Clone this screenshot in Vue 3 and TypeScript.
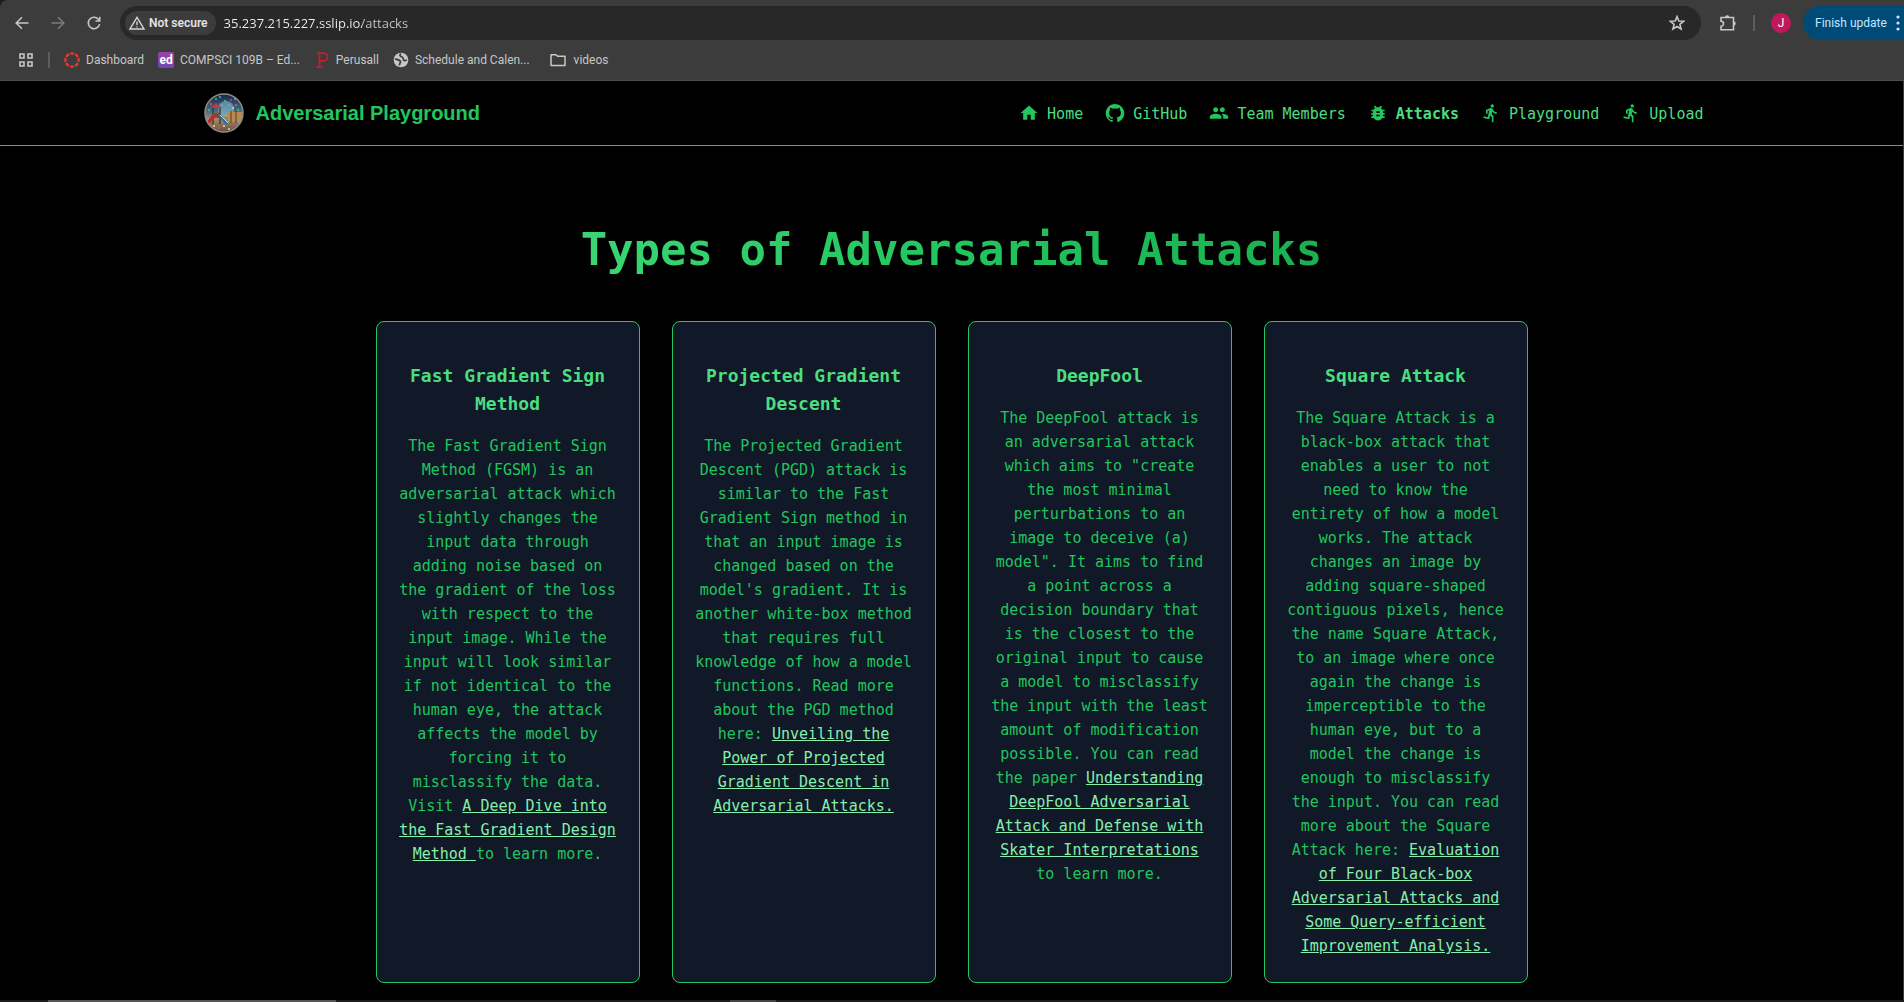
<script setup lang="ts">
interface NavItem {
  label: string
  icon: string
  viewBox: string
  active?: boolean
}

interface Attack {
  title: string
  before: string
  link: string
  after: string
}

const runner =
  'M13.49 5.48c1.1 0 2-.9 2-2s-.9-2-2-2-2 .9-2 2 .9 2 2 2zm-3.6 13.9l1-4.4 2.1 2v6h2v-7.5l-2.1-2 .6-3c1.3 1.5 3.3 2.5 5.5 2.5v-2c-1.9 0-3.5-1-4.3-2.4l-1-1.6c-.4-.6-1-1-1.7-1-.3 0-.5.1-.8.1l-5.2 2.2v4.7h2v-3.4l1.8-.7-1.6 8.1-4.9-1-.4 2 7 1.4z'

const navItems: NavItem[] = [
  { label: 'Home', viewBox: '0 0 24 24', icon: 'M10 20v-6h4v6h5v-8h3L12 3 2 12h3v8z' },
  {
    label: 'GitHub',
    viewBox: '-1 -1 26 26',
    icon: 'M12 .297c-6.63 0-12 5.373-12 12 0 5.303 3.438 9.8 8.205 11.385.6.113.82-.258.82-.577 0-.285-.01-1.04-.015-2.04-3.338.724-4.042-1.61-4.042-1.61C4.422 18.07 3.633 17.7 3.633 17.7c-1.087-.744.084-.729.084-.729 1.205.084 1.838 1.236 1.838 1.236 1.07 1.835 2.809 1.305 3.495.998.108-.776.417-1.305.76-1.605-2.665-.3-5.466-1.332-5.466-5.93 0-1.31.465-2.38 1.235-3.22-.135-.303-.54-1.523.105-3.176 0 0 1.005-.322 3.3 1.23.96-.267 1.98-.399 3-.405 1.02.006 2.04.138 3 .405 2.28-1.552 3.285-1.23 3.285-1.23.645 1.653.24 2.873.12 3.176.765.84 1.23 1.91 1.23 3.22 0 4.61-2.805 5.625-5.475 5.92.42.36.81 1.096.81 2.22 0 1.606-.015 2.896-.015 3.286 0 .315.21.69.825.57C20.565 22.092 24 17.592 24 12.297c0-6.627-5.373-12-12-12',
  },
  {
    label: 'Team Members',
    viewBox: '0 0 24 24',
    icon: 'M16 11c1.66 0 2.99-1.34 2.99-3S17.66 5 16 5c-1.66 0-3 1.34-3 3s1.34 3 3 3zm-8 0c1.66 0 2.99-1.34 2.99-3S9.66 5 8 5C6.34 5 5 6.34 5 8s1.34 3 3 3zm0 2c-2.33 0-7 1.17-7 3.5V19h14v-2.5c0-2.33-4.67-3.5-7-3.5zm8 0c-.29 0-.62.02-.97.05 1.16.84 1.97 1.97 1.97 3.45V19h6v-2.5c0-2.33-4.67-3.5-7-3.5z',
  },
  {
    label: 'Attacks',
    viewBox: '0 0 24 24',
    active: true,
    icon: 'M20 8h-2.81c-.45-.78-1.07-1.45-1.82-1.96L17 4.41 15.59 3l-2.17 2.17C12.96 5.06 12.49 5 12 5c-.49 0-.96.06-1.41.17L8.41 3 7 4.41l1.62 1.63C7.88 6.55 7.26 7.22 6.81 8H4v2h2.09c-.05.33-.09.66-.09 1v1H4v2h2v1c0 .34.04.67.09 1H4v2h2.81c1.04 1.79 2.97 3 5.19 3s4.15-1.21 5.19-3H20v-2h-2.09c.05-.33.09-.66.09-1v-1h2v-2h-2v-1c0-.34-.04-.67-.09-1H20V8zm-6 8h-4v-2h4v2zm0-4h-4v-2h4v2z',
  },
  { label: 'Playground', viewBox: '0 0 24 24', icon: runner },
  { label: 'Upload', viewBox: '0 0 24 24', icon: runner },
]

const attacks: Attack[] = [
  {
    title: 'Fast Gradient Sign Method',
    before:
      'The Fast Gradient Sign Method (FGSM) is an adversarial attack which slightly changes the input data through adding noise based on the gradient of the loss with respect to the input image. While the input will look similar if not identical to the human eye, the attack affects the model by forcing it to misclassify the data. Visit ',
    link: 'A Deep Dive into the Fast Gradient Design Method ',
    after: 'to learn more.',
  },
  {
    title: 'Projected Gradient Descent',
    before:
      "The Projected Gradient Descent (PGD) attack is similar to the Fast Gradient Sign method in that an input image is changed based on the model's gradient. It is another white-box method that requires full knowledge of how a model functions. Read more about the PGD method here: ",
    link: 'Unveiling the Power of Projected Gradient Descent in Adversarial Attacks.',
    after: '',
  },
  {
    title: 'DeepFool',
    before:
      'The DeepFool attack is an adversarial attack which aims to "create the most minimal perturbations to an image to deceive (a) model". It aims to find a point across a decision boundary that is the closest to the original input to cause a model to misclassify the input with the least amount of modification possible. You can read the paper ',
    link: 'Understanding DeepFool Adversarial Attack and Defense with Skater Interpretations',
    after: ' to learn more.',
  },
  {
    title: 'Square Attack',
    before:
      'The Square Attack is a black-box attack that enables a user to not need to know the entirety of how a model works. The attack changes an image by adding square-shaped contiguous pixels, hence the name Square Attack, to an image where once again the change is imperceptible to the human eye, but to a model the change is enough to misclassify the input. You can read more about the Square Attack here: ',
    link: 'Evaluation of Four Black-box Adversarial Attacks and Some Query-efficient Improvement Analysis.',
    after: '',
  },
]
</script>

<template>
  <div class="window">
    <header class="chrome">
      <div class="toolbar">
        <div class="history">
          <button type="button" class="tool" aria-label="Back">
            <svg viewBox="0 0 16 16"><path d="M14.5 8H2.5M8 2.200L2.200 8L8 13.800" /></svg>
          </button>
          <button type="button" class="tool dim" aria-label="Forward">
            <svg viewBox="0 0 16 16"><path d="M1.500 8H13.500M8 2.200L13.800 8L8 13.800" /></svg>
          </button>
          <button type="button" class="tool" aria-label="Reload">
            <svg viewBox="0 0 16 16"><path d="M13.600 9.200A5.700 5.700 0 1 1 12.300 4.200L13.600 5.600M13.700 1.800V6H9.500" /></svg>
          </button>
        </div>
        <div class="omnibox">
          <button type="button" class="chip">
            <svg viewBox="0 0 16 16"><path d="M8 2.300L15 14H1ZM8 6.500V10M8 11.200V12.600" /></svg>
            <span>Not secure</span>
          </button>
          <input class="url" type="text" aria-label="Address" value="35.237.215.227.sslip.io/attacks" />
          <button type="button" class="tool" aria-label="Bookmark this page">
            <svg viewBox="0 0 16 16"><path d="M8 1.600L9.800 6L14.600 6.300L10.900 9.400L12.100 14L8 11.500L3.900 14L5.100 9.400L1.400 6.300L6.200 6Z" /></svg>
          </button>
        </div>
        <div class="actions">
          <button type="button" class="tool puzzle" aria-label="Extensions">
            <svg viewBox="0 0 18 18">
              <path d="M2 3.500H14.500V15.800H2V12.200A2.400 2.400 0 0 0 2 7.200Z" />
              <path class="solid" d="M6 3.500A2.200 2.200 0 0 1 10.400 3.500ZM14.500 7.300A2.200 2.200 0 0 1 14.500 11.700Z" />
            </svg>
          </button>
          <span class="divider"></span>
          <button type="button" class="avatar">J</button>
          <button type="button" class="update">
            <span>Finish update</span>
            <svg viewBox="0 0 4 16"><circle cx="2" cy="2" r="1.600" /><circle cx="2" cy="8" r="1.600" /><circle cx="2" cy="14" r="1.600" /></svg>
          </button>
        </div>
      </div>
      <nav class="bookmarks" aria-label="Bookmarks">
        <button type="button" class="tool apps" aria-label="Apps">
          <svg viewBox="0 0 16 16"><path d="M2 2H6V6H2ZM10 2H14V6H10ZM2 10H6V14H2ZM10 10H14V14H10Z" /></svg>
        </button>
        <span class="divider"></span>
        <a href="#" class="mark">
          <svg viewBox="0 0 16 16">
            <circle cx="8" cy="8" r="6.600" fill="none" stroke="#e5392c" stroke-width="2.400" stroke-dasharray="4 1.184" stroke-dashoffset="2" />
          </svg>
          <span>Dashboard</span>
        </a>
        <a href="#" class="mark">
          <span class="ed">ed</span>
          <span>COMPSCI 109B – Ed...</span>
        </a>
        <a href="#" class="mark">
          <svg viewBox="0 0 16 16">
            <path d="M3 1.200H9C15 1.200 15 9 9 9H6.500M5.500 1.200V14.800M2.500 14.800H8.500" fill="none" stroke="#c3202f" stroke-width="1.800" />
          </svg>
          <span>Perusall</span>
        </a>
        <a href="#" class="mark">
          <svg viewBox="0 0 16 16">
            <circle cx="8" cy="8" r="7.300" fill="#c4c7cb" />
            <path d="M8 1.800C6 3 7 4.500 9 5C11 5.500 9.500 7.500 11 8.500C12 9 13.500 8 14 8M2 7C4 7.500 7 8 7.500 9.500C8 11 6 11 6.500 13.500" fill="none" stroke="#3c3c3c" stroke-width="1.700" />
          </svg>
          <span>Schedule and Calen...</span>
        </a>
        <a href="#" class="mark folder">
          <svg viewBox="0 0 16 16">
            <path d="M1 2.700H6L7.600 4.300H15V13.500H1Z" fill="none" stroke="#c7c7c7" stroke-width="1.500" stroke-linejoin="round" />
          </svg>
          <span>videos</span>
        </a>
      </nav>
    </header>

    <div class="page">
      <header class="site-header">
        <div class="site-bar">
          <a href="#" class="brand">
            <svg class="logo" viewBox="0 0 40 40" aria-hidden="true">
              <defs>
                <linearGradient id="sky" x1="0" y1="0" x2="0" y2="1">
                  <stop offset="0" stop-color="#17233c" />
                  <stop offset="0.450" stop-color="#3d6f8c" />
                  <stop offset="0.650" stop-color="#a68a63" />
                  <stop offset="1" stop-color="#5b4a45" />
                </linearGradient>
                <clipPath id="disc"><circle cx="20" cy="20" r="19" /></clipPath>
              </defs>
              <g clip-path="url(#disc)">
                <rect width="40" height="40" fill="url(#sky)" />
                <circle cx="22" cy="16" r="8" fill="#9accd8" opacity="0.500" />
                <path d="M24 19H38V29H24Z" fill="#b98a50" />
                <path d="M27 18V30M32 17V30" stroke="#5a3b25" stroke-width="1" />
                <path d="M9 15V31M16 15V31" stroke="#583020" stroke-width="1.400" />
                <path d="M9 20H16V25H9Z" fill="#8c4628" />
                <path d="M7 15L12 10L18 15Z" fill="#d5323c" />
                <path d="M10 22L4 30" stroke="#c62532" stroke-width="3" />
                <path d="M15 22L23 31" stroke="#1c69b5" stroke-width="2.500" />
                <path d="M16 22L24 30" stroke="#b8dcf5" stroke-width="1" />
                <g fill="#d84562">
                  <circle cx="7" cy="11" r="1.200" /><circle cx="27" cy="7" r="1" /><circle cx="32" cy="12" r="1.300" /><circle cx="14" cy="35" r="1.300" /><circle cx="30" cy="32" r="1.100" />
                </g>
                <g fill="#47c98a">
                  <circle cx="12" cy="6" r="0.900" /><circle cx="21" cy="8" r="1.100" /><circle cx="34" cy="17" r="1" /><circle cx="5" cy="17" r="1" />
                </g>
                <g fill="#61a8ee">
                  <circle cx="16" cy="4" r="1" /><circle cx="25" cy="12" r="1.100" /><circle cx="18" cy="12" r="1" /><circle cx="31" cy="6" r="1" /><circle cx="35" cy="29" r="1" />
                </g>
                <g fill="#f3d092">
                  <circle cx="20" cy="33" r="1" /><circle cx="25" cy="36" r="1" /><circle cx="10" cy="33" r="1" /><circle cx="29" cy="15" r="1" />
                </g>
              </g>
              <circle cx="20" cy="20" r="19" fill="none" stroke="#938b82" stroke-width="1.500" />
            </svg>
            <span>Adversarial Playground</span>
          </a>
          <nav class="site-nav" aria-label="Main">
            <a v-for="item in navItems" :key="item.label" href="#" :class="{ active: item.active }">
              <svg :viewBox="item.viewBox" aria-hidden="true"><path :d="item.icon" /></svg>
              <span>{{ item.label }}</span>
            </a>
          </nav>
        </div>
      </header>

      <main class="content">
        <h1>Types of Adversarial Attacks</h1>
        <div class="cards">
          <article v-for="attack in attacks" :key="attack.title" class="card">
            <h2>{{ attack.title }}</h2>
            <p>{{ attack.before }}<a href="#">{{ attack.link }}</a>{{ attack.after }}</p>
          </article>
        </div>
      </main>
    </div>
    <div class="taskbar"><span class="task"></span><span class="tray"></span></div>
  </div>
</template>

<style>
body {
  margin: 0;
  background: #000;
}
</style>

<style scoped>
* {
  box-sizing: border-box;
}
.window {
  display: flex;
  flex-direction: column;
  min-height: 100vh;
  background: #1f1f1f;
  overflow: hidden;
}
button {
  margin: 0;
  padding: 0;
  border: 0;
  background: none;
  color: inherit;
  font: inherit;
}
a {
  color: inherit;
  text-decoration: none;
}
svg {
  display: block;
  flex: none;
}

/* Browser chrome */
.chrome {
  height: 81px;
  background: #3c3c3c;
  border-bottom: 1px solid #4d4f4f;
  border-top-left-radius: 8px;
  color: #c7c7c7;
  font: 12px/16px Roboto, "Open Sans", sans-serif;
}
.toolbar {
  display: flex;
  align-items: center;
  padding-top: 6px;
}
.history {
  display: flex;
  gap: 20px;
  padding: 0 18px 0 14px;
}
.tool svg {
  width: 16px;
  height: 16px;
  fill: none;
  stroke: #c7c7c7;
  stroke-width: 1.6;
}
.dim svg {
  stroke: #7b7b7b;
}
.omnibox {
  display: flex;
  flex: 1;
  align-items: center;
  height: 34px;
  padding: 0 16px 0 5px;
  border-radius: 17px;
  background: #282828;
}
.chip {
  display: flex;
  align-items: center;
  gap: 4px;
  height: 24px;
  padding: 0 8px 0 4px;
  border-radius: 12px;
  background: #3c3c3c;
  color: #e3e3e3;
  font-weight: 600;
}
.chip svg {
  width: 16px;
  height: 16px;
  fill: none;
  stroke: #d5d5d5;
  stroke-width: 1.4;
}
.url {
  flex: 1;
  min-width: 0;
  margin: 0 8px;
  padding: 0;
  border: 0;
  outline: 0;
  background: linear-gradient(90deg, #f1f1f1 138px, #c7c7c7 138px);
  background-clip: text;
  color: transparent;
  font: 13px/20px "Open Sans", "Noto Sans", sans-serif;
}
.actions {
  display: flex;
  align-items: center;
  padding-left: 18px;
}
.puzzle svg {
  width: 18px;
  height: 18px;
}
.puzzle .solid {
  fill: #c7c7c7;
  stroke: none;
}
.divider {
  width: 2px;
  height: 16px;
  background: #5d5e5f;
}
.actions .divider {
  margin: 0 16px;
}
.avatar {
  width: 20px;
  height: 20px;
  border-radius: 50%;
  background: #c2185b;
  color: #fff;
}
.update {
  display: flex;
  align-items: center;
  justify-content: space-between;
  width: 101px;
  height: 34px;
  margin-left: 12px;
  padding: 0 4px 0 12px;
  border-radius: 17px 0 0 17px;
  background: #004a77;
  color: #c2e7ff;
  white-space: nowrap;
}
.update svg {
  width: 4px;
  height: 16px;
  fill: #c2e7ff;
}
.bookmarks {
  display: flex;
  align-items: center;
  height: 40px;
  padding-left: 18px;
}
.apps {
  margin-right: 14px;
}
.mark {
  display: flex;
  align-items: center;
  gap: 6px;
  margin-left: 14px;
  white-space: nowrap;
}
.mark svg {
  width: 16px;
  height: 16px;
}
.folder {
  gap: 8px;
  margin-left: 20px;
}
.ed {
  width: 16px;
  height: 16px;
  border-radius: 2px;
  background: linear-gradient(20deg, #6a45b8, #a742a4);
  color: #fff;
  font-weight: 700;
  text-align: center;
}

/* Site */
.page {
  flex: 1;
  border-right: 1px solid #3c3c3c;
  background: #000;
  color: #22c55e;
  font: 15px/24px "DejaVu Sans Mono", "Liberation Mono", monospace;
}
.site-header {
  border-bottom: 1px solid #22c55e;
}
.site-bar {
  display: flex;
  align-items: center;
  justify-content: space-between;
  max-width: 1536px;
  height: 64px;
  margin: 0 auto;
  padding: 0 16px;
}
.brand {
  display: flex;
  align-items: center;
  gap: 12px;
  padding-left: 4px;
  font: bold 20px/28px "Liberation Sans", Arial, sans-serif;
}
.logo {
  width: 40px;
  height: 40px;
}
.site-nav {
  display: flex;
  gap: 22px;
}
.site-nav a {
  display: flex;
  align-items: center;
  gap: 8px;
  color: #4ade80;
}
.site-nav span {
  padding-top: 2px;
}
.site-nav svg {
  width: 20px;
  height: 20px;
  fill: #22c55e;
}
.site-nav .active {
  font-weight: 700;
}
.content {
  max-width: 1184px;
  margin: 0 auto;
  padding: 80px 16px 16px;
}
h1 {
  margin: 0 0 47px;
  background: linear-gradient(to right, #4ade80, #22c55e, #16a34a);
  background-clip: text;
  color: transparent;
  font-size: 44px;
  line-height: 48px;
  text-align: center;
}
.cards {
  display: grid;
  grid-template-columns: repeat(4, 1fr);
  gap: 32px;
}
.card {
  padding: 40px 20px 24px;
  border: 1px solid #22c55e;
  border-radius: 8px;
  background: #111827;
  text-align: center;
}
h2 {
  margin: 0 0 16px;
  color: #4ade80;
  font-size: 18px;
  line-height: 28px;
}
p {
  margin: 0;
}
p a {
  color: #86efac;
  text-decoration: underline;
}

/* Top edge of the desktop taskbar */
.taskbar {
  display: flex;
  height: 2px;
  padding-left: 48px;
  background: #1c1c1c;
}
.task {
  width: 288px;
  background: #555;
}
.tray {
  width: 46px;
  margin-left: 394px;
  background: #444;
}
</style>
